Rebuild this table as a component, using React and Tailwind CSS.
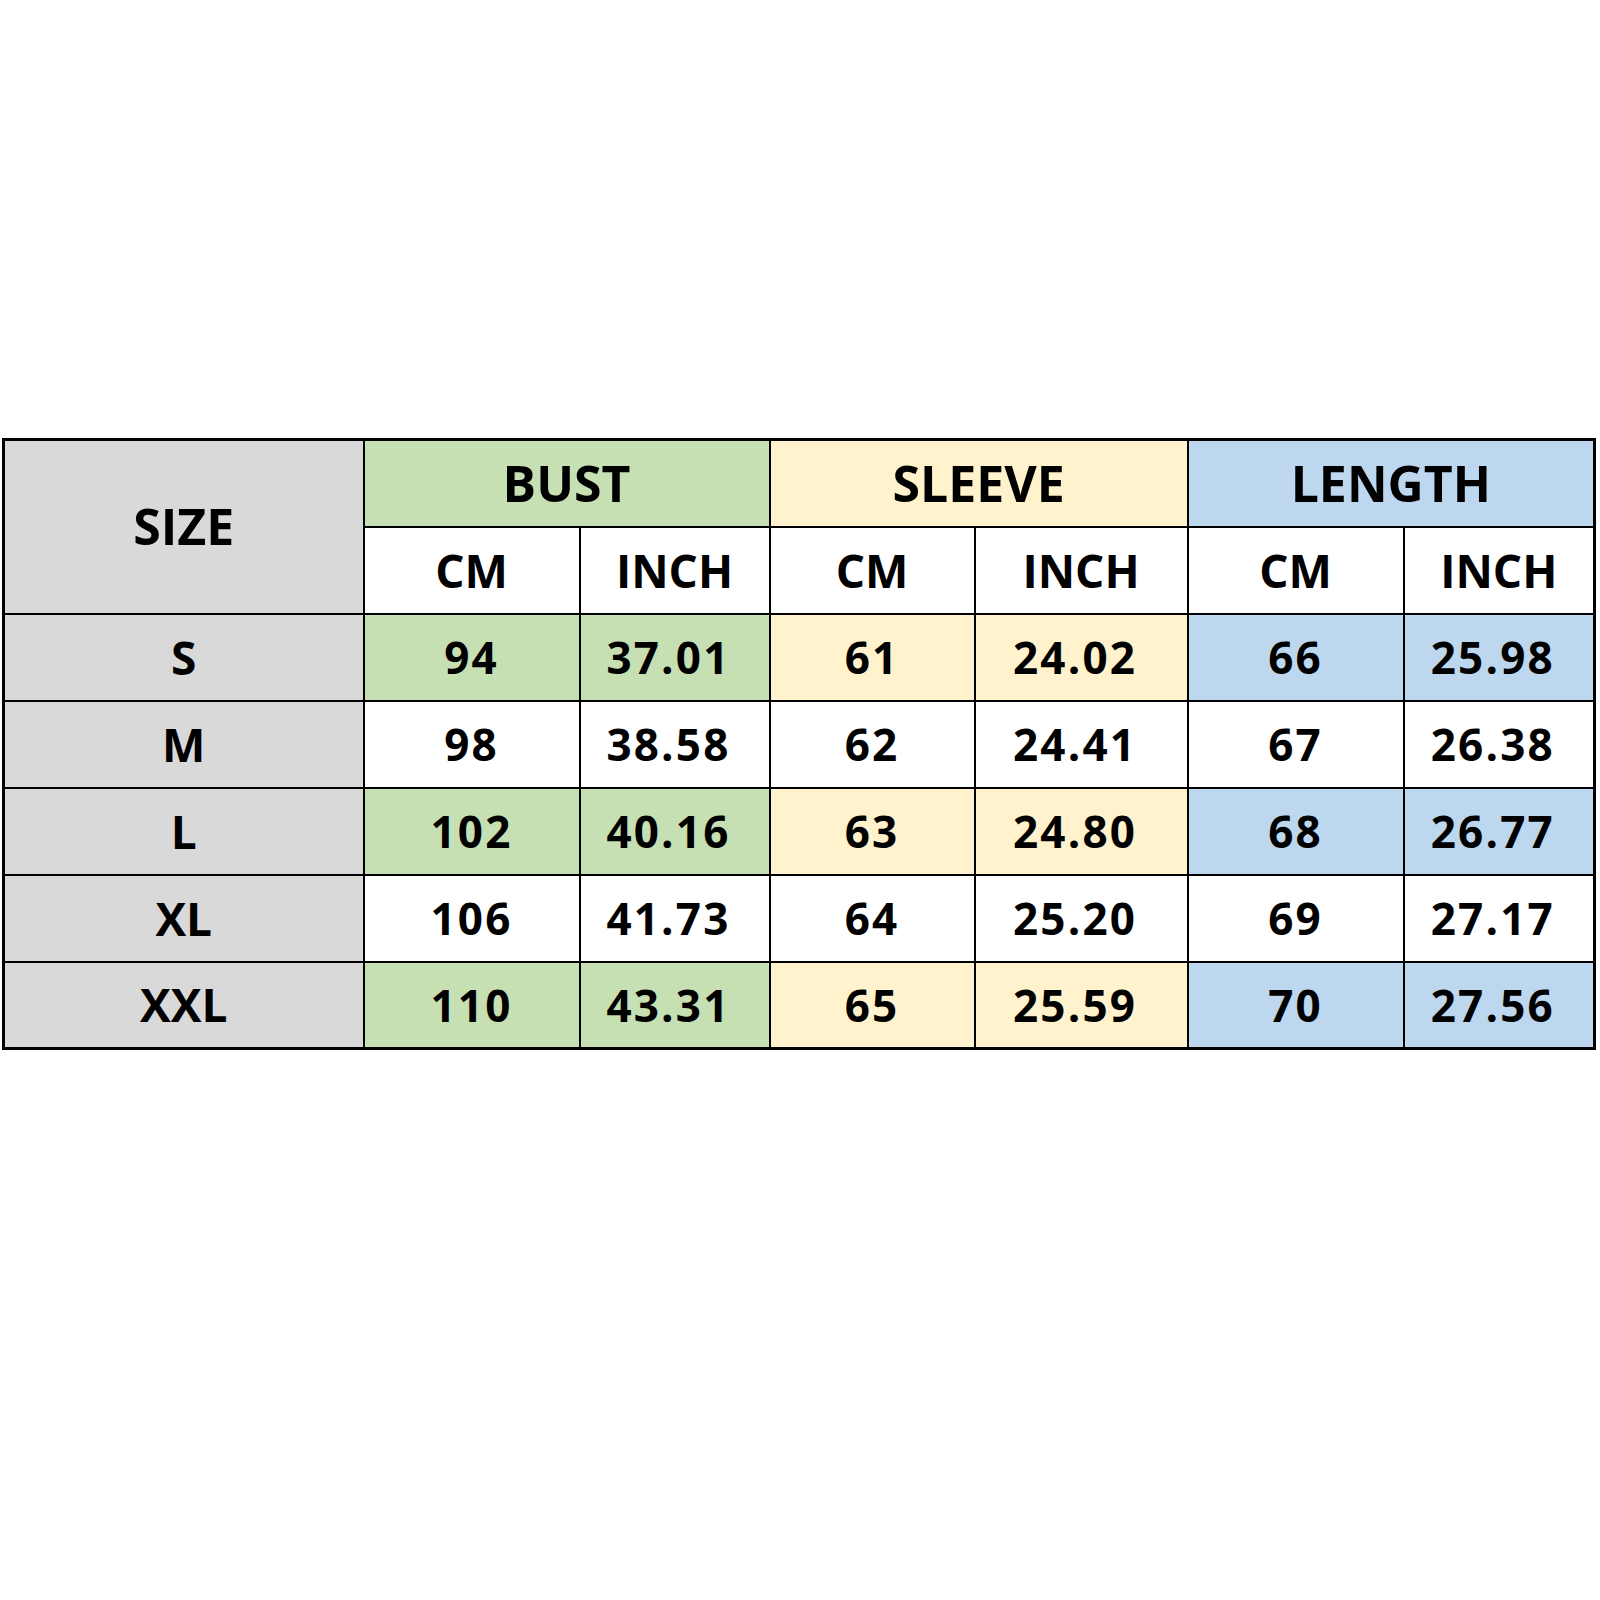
const rows = [
  { size: 'S', bust: ['94', '37.01'], sleeve: ['61', '24.02'], length: ['66', '25.98'], shaded: true },
  { size: 'M', bust: ['98', '38.58'], sleeve: ['62', '24.41'], length: ['67', '26.38'], shaded: false },
  { size: 'L', bust: ['102', '40.16'], sleeve: ['63', '24.80'], length: ['68', '26.77'], shaded: true },
  { size: 'XL', bust: ['106', '41.73'], sleeve: ['64', '25.20'], length: ['69', '27.17'], shaded: false },
  { size: 'XXL', bust: ['110', '43.31'], sleeve: ['65', '25.59'], length: ['70', '27.56'], shaded: true },
];

const cell = 'border-2 border-black text-center align-middle p-0';

export default function App() {
  return (
    <div className="min-h-[1600px] bg-white pt-[438px] pl-[2px] font-['Open_Sans',sans-serif] font-bold text-black">
      <table className="w-[1591px] table-fixed border-collapse border-[3px] border-black">
        <colgroup>
          <col className="w-[360px]" />
          <col className="w-[216px]" />
          <col className="w-[190px]" />
          <col className="w-[205px]" />
          <col className="w-[213px]" />
          <col className="w-[216px]" />
          <col className="w-[191px]" />
        </colgroup>
        <thead>
          <tr className="h-[87px]">
            <th rowSpan={2} className={`${cell} bg-[#d9d9d9] text-[50px] font-bold`}>SIZE</th>
            <th colSpan={2} className={`${cell} bg-[#c6e0b4] text-[50px] font-bold`}>BUST</th>
            <th colSpan={2} className={`${cell} bg-[#fff2cc] text-[50px] font-bold`}>SLEEVE</th>
            <th colSpan={2} className={`${cell} bg-[#bdd7ee] text-[50px] font-bold`}>LENGTH</th>
          </tr>
          <tr className="h-[87px]">
            {['CM', 'INCH', 'CM', 'INCH', 'CM', 'INCH'].map((label, i) => (
              <th key={i} className={`${cell} bg-white text-[46px] font-bold`}>{label}</th>
            ))}
          </tr>
        </thead>
        <tbody>
          {rows.map((r) => (
            <tr key={r.size} className="h-[87px] text-[44px] tracking-[0.05em]">
              <td className={`${cell} bg-[#d9d9d9] text-[46px] tracking-normal`}>{r.size}</td>
              <td className={`${cell} ${r.shaded ? 'bg-[#c6e0b4]' : 'bg-white'}`}>{r.bust[0]}</td>
              <td className={`${cell} pr-3 ${r.shaded ? 'bg-[#c6e0b4]' : 'bg-white'}`}>{r.bust[1]}</td>
              <td className={`${cell} ${r.shaded ? 'bg-[#fff2cc]' : 'bg-white'}`}>{r.sleeve[0]}</td>
              <td className={`${cell} pr-3 ${r.shaded ? 'bg-[#fff2cc]' : 'bg-white'}`}>{r.sleeve[1]}</td>
              <td className={`${cell} ${r.shaded ? 'bg-[#bdd7ee]' : 'bg-white'}`}>{r.length[0]}</td>
              <td className={`${cell} pr-3 ${r.shaded ? 'bg-[#bdd7ee]' : 'bg-white'}`}>{r.length[1]}</td>
            </tr>
          ))}
        </tbody>
      </table>
    </div>
  );
}
